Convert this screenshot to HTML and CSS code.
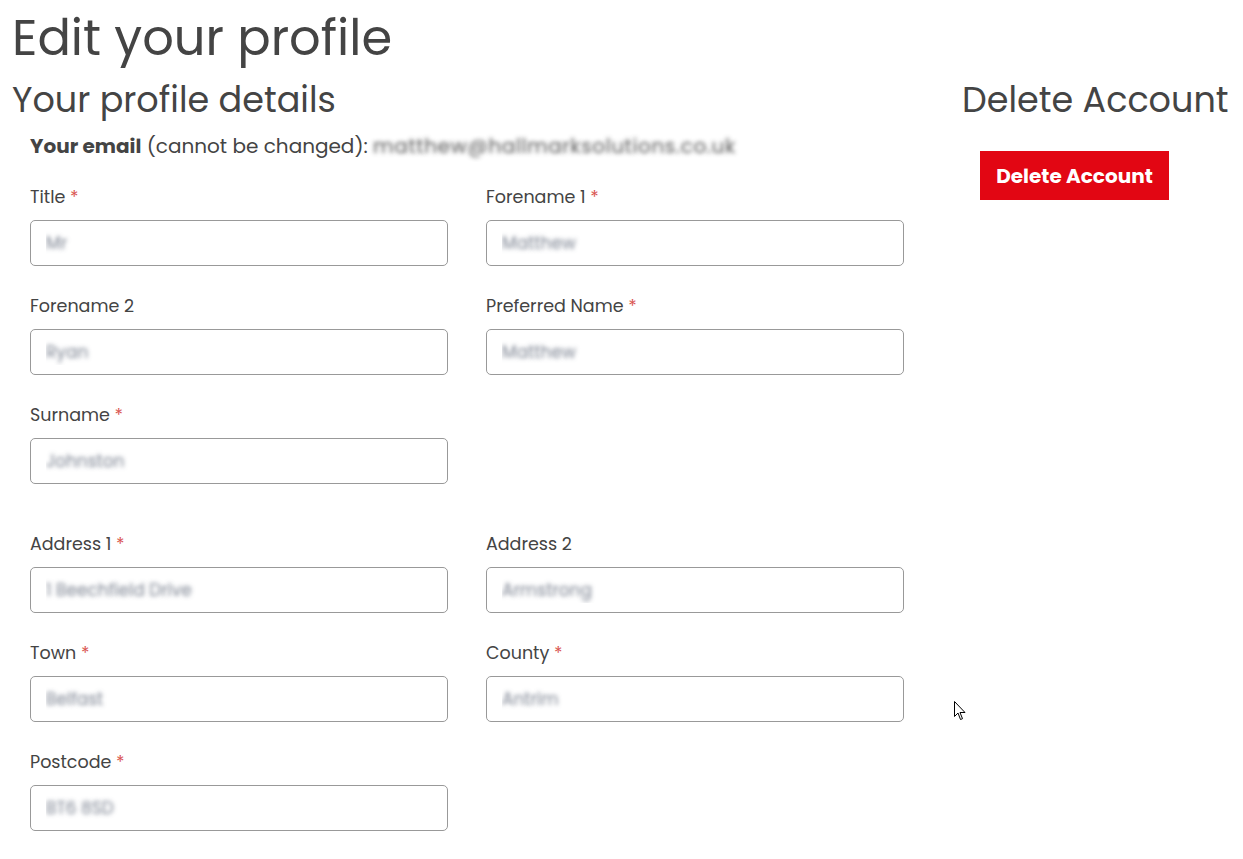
FILE: index.html
```html
<!DOCTYPE html>
<html lang="en">
<head>
    <meta charset="UTF-8" />
    <title>Edit your profile</title>
    <link rel="stylesheet" href="styles.css">
</head>
<body>
    <h1 class="page-title">Edit your profile</h1>

    <div class="layout">
        <section class="profile">
            <h2>Your profile details</h2>
            <div class="section-body">
                <p class="email"><strong>Your email</strong> (cannot be changed): <span class="masked">matthew@hallmarksolutions.co.uk</span></p>

                <form class="profile-form">
                    <div class="field">
                        <label>Title <span class="req">*</span></label>
                        <input type="text" value="Mr" />
                    </div>
                    <div class="field">
                        <label>Forename 1 <span class="req">*</span></label>
                        <input type="text" value="Matthew" />
                    </div>
                    <div class="field">
                        <label>Forename 2</label>
                        <input type="text" value="Ryan" />
                    </div>
                    <div class="field">
                        <label>Preferred Name <span class="req">*</span></label>
                        <input type="text" value="Matthew" />
                    </div>
                    <div class="field">
                        <label>Surname <span class="req">*</span></label>
                        <input type="text" value="Johnston" />
                    </div>

                    <!-- address block -->
                    <div class="field new-group">
                        <label>Address 1 <span class="req">*</span></label>
                        <input type="text" value="1 Beechfield Drive" />
                    </div>
                    <div class="field group-top">
                        <label>Address 2</label>
                        <input type="text" value="Armstrong" />
                    </div>
                    <div class="field">
                        <label>Town <span class="req">*</span></label>
                        <input type="text" value="Belfast" />
                    </div>
                    <div class="field">
                        <label>County <span class="req">*</span></label>
                        <input type="text" value="Antrim" />
                    </div>
                    <div class="field">
                        <label>Postcode <span class="req">*</span></label>
                        <input type="text" value="BT6 8SD" />
                    </div>
                </form>
            </div>
        </section>

        <aside class="account">
            <h2>Delete Account</h2>
            <div class="section-body">
                <button type="button" class="btn-danger">Delete Account</button>
            </div>
        </aside>
    </div>

    <!-- mouse pointer -->
    <svg class="cursor" width="12" height="20" viewBox="0 0 12 20">
        <path d="M0.5 0.5 L0.5 15.5 L4 12 L6.5 18.5 L8.5 17.7 L6 11.5 L11 11.5 Z" fill="#fff" stroke="#000" stroke-width="1" stroke-linejoin="miter" />
    </svg>
</body>
</html>
```

FILE: styles.css
```css
body {
    margin: 0;
    padding: 0 12px;
    font-family: "Poppins", "Open Sans", sans-serif;
    color: #444;
    background: #fff;
    position: relative;
}

.page-title {
    font-size: 49.5px;
    font-weight: 400;
    line-height: 56px;
    margin: 10px 0 0;
    color: #444;
}

h2 {
    font-size: 35px;
    font-weight: 400;
    line-height: 42px;
    margin: 13px 0 0;
    color: #444;
}

.layout {
    display: flex;
}

.profile {
    width: 950px;
}

.account {
    flex: 1;
}

.section-body {
    padding-left: 18px;
}

.email {
    font-size: 20px;
    line-height: 30px;
    margin: 10px 0 0;
}

.email strong {
    font-weight: 700;
}

.masked {
    color: transparent;
    letter-spacing: 0.6px;
    text-shadow: 0 0 4px rgba(60, 60, 60, 0.85);
}

.profile-form {
    display: grid;
    grid-template-columns: 418px 418px;
    column-gap: 38px;
    row-gap: 27px;
    margin-top: 23px;
}

.field label {
    display: block;
    font-size: 17.5px;
    line-height: 26px;
    color: #444;
    margin-bottom: 10px;
}

.field.new-group {
    grid-column: 1;
    margin-top: 20px;
}

.field.group-top {
    margin-top: 20px;
}

.req {
    color: #d9534f;
}

.field input {
    box-sizing: border-box;
    width: 100%;
    height: 46px;
    padding: 0 15px;
    border: 1px solid #999;
    border-radius: 5px;
    font-family: inherit;
    font-size: 17px;
    color: transparent;
    text-shadow: 0 0 4px rgba(70, 80, 100, 0.7);
    background: #fff;
}

.btn-danger {
    margin-top: 30px;
    width: 189px;
    height: 49px;
    background: #e20613;
    color: #fff;
    border: none;
    font-family: inherit;
    font-size: 20px;
    font-weight: 700;
    cursor: pointer;
}

.cursor {
    position: absolute;
    left: 954px;
    top: 701px;
}
```
